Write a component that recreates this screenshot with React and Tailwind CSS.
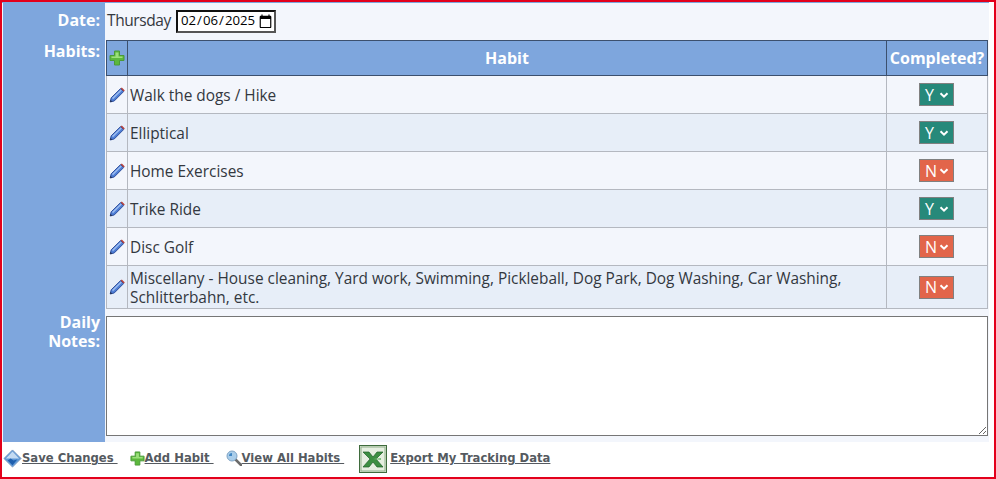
const HABITS = [
  { name: 'Walk the dogs / Hike', done: 'Y' },
  { name: 'Elliptical', done: 'Y' },
  { name: 'Home Exercises', done: 'N' },
  { name: 'Trike Ride', done: 'Y' },
  { name: 'Disc Golf', done: 'N' },
  {
    name: 'Miscellany - House cleaning, Yard work, Swimming, Pickleball, Dog Park, Dog Washing, Car Washing, Schlitterbahn, etc.',
    done: 'N',
  },
]

function PlusIcon({ className }) {
  return (
    <svg viewBox="0 0 16 16" className={className}>
      <path d="M5.5 1h5v4.5H15v5h-4.5V15h-5v-4.5H1v-5h4.5z" fill="#5cb83c" stroke="#4a9a38" strokeWidth="1" />
      <path d="M6.5 2.5h3v4h-3zM2.5 6.5h11v1.5h-11z" fill="#9be07a" />
    </svg>
  )
}

function PencilIcon() {
  return (
    <svg viewBox="0 0 16 16" className="w-[16px] h-[16px]">
      <path d="M1.2 15l1-4.2L11.6 1.6l3 3L5.3 13.9z" fill="#4f7fd6" stroke="#2f4f9c" strokeWidth="1" />
      <path d="M3 11L11.8 2.4l1 1L4 12.2z" fill="#9dbdf0" />
      <path d="M11.6 1.6l1.2-1 3 3-1.2 1z" fill="#b5433f" />
      <path d="M1.2 15l.5-2 1.5 1.5z" fill="#20263c" />
    </svg>
  )
}

function SaveIcon() {
  return (
    <svg viewBox="0 0 20 20" className="w-[19px] h-[19px] shrink-0">
      <path d="M10 1l9 9-9 9-9-9z" fill="#5c97d6" stroke="#7d9ac0" strokeWidth="1" />
      <path d="M10 2.5L17 10H3z" fill="#c3daf2" />
      <path d="M5 12l3-2 3 2 4-1-5 6z" fill="#1f5fae" />
    </svg>
  )
}

function SearchIcon() {
  return (
    <svg viewBox="0 0 16 16" className="w-[16px] h-[16px] shrink-0">
      <path d="M9.5 9.5L15 15" stroke="#6b6b6b" strokeWidth="2.5" strokeLinecap="round" />
      <circle cx="6" cy="6" r="5" fill="#a9cdea" stroke="#7fa3c4" strokeWidth="1" />
      <path d="M3 6a3 3 0 0 1 3-3v3z" fill="#3f86c4" />
    </svg>
  )
}

function ExcelIcon() {
  return (
    <svg viewBox="0 0 28 28" className="w-[28px] h-[28px] shrink-0">
      <rect x="0.5" y="0.5" width="27" height="27" fill="#dce8d6" stroke="#3f6b3d" />
      <rect x="2" y="2" width="24" height="24" fill="#e6efe1" stroke="#8fb08a" />
      <path d="M4 7h6l4 5 4-5h6l-7 7 7 8h-6l-4-5-4 5H4l7-8z" fill="#3c8f42" stroke="#215f2a" strokeWidth="0.7" />
      <path d="M14 14l8-1v2z" fill="#7cc07c" />
    </svg>
  )
}

function YesNo({ value }) {
  const color = value === 'Y' ? 'bg-[#26897a]' : 'bg-[#e2654a]'
  return (
    <div className={`inline-flex items-center justify-between w-[35px] h-[23px] pl-[5px] pr-[4px] border border-[#808080] text-white text-[16px] ${color}`}>
      <span>{value}</span>
      <svg viewBox="0 0 10 10" className="w-[10px] h-[10px]">
        <path d="M1.5 3.2L5 6.7l3.5-3.5" fill="none" stroke="white" strokeWidth="2" />
      </svg>
    </div>
  )
}

function FooterLink({ icon, label, className = '' }) {
  return (
    <a className={`flex items-center text-[11.6px] font-bold text-[#555a60] ${className}`}>
      {icon}
      <span className="underline whitespace-pre">{label}</span>
    </a>
  )
}

export default function App() {
  return (
    <div className="w-[996px] h-[479px] overflow-hidden bg-white border-2 border-[#e3001b] text-[#33383f] font-['Open_Sans',sans-serif]">
      <div className="flex w-[987px] h-[440px] bg-[#f3f6fc] border-t border-[#7ea6dd]">
        <div className="w-[102px] ml-px shrink-0 bg-[#7ea6dd] text-white font-bold text-[16px] text-right pr-[5px] leading-[19px]">
          <div className="pt-[8px]">Date:</div>
          <div className="pt-[12px]">Habits:</div>
          <div className="pt-[252px]">Daily<br />Notes:</div>
        </div>
        <div className="flex-1 pl-px">
          <div className="flex items-center h-[37px] pb-px pl-px gap-[5px] text-[15.5px]">
            <span className="w-[64px] whitespace-nowrap tracking-[-0.4px]">Thursday</span>
            <input
              type="date"
              defaultValue="2025-02-06"
              className="w-[100px] h-[23px] border-2 border-t-[#111111] border-l-[#111111] border-r-[#555555] border-b-[#555555] bg-white pl-[2px] pr-0 text-[13.2px] text-black [&::-webkit-calendar-picker-indicator]:m-0 [&::-webkit-calendar-picker-indicator]:p-0 [&::-webkit-calendar-picker-indicator]:w-[16px]"
            />
          </div>
          <table className="w-[882px] border-collapse table-fixed text-[15.4px]">
            <colgroup>
              <col className="w-[21px]" />
              <col />
              <col className="w-[101px]" />
            </colgroup>
            <thead>
              <tr className="h-[35px] bg-[#7ea6dd] text-white font-bold text-[16px]">
                <th className="border border-[#3c506e] p-0"><PlusIcon className="w-[16px] h-[16px] mx-auto" /></th>
                <th className="border border-[#3c506e] p-0">Habit</th>
                <th className="border border-[#3c506e] p-0">Completed?</th>
              </tr>
            </thead>
            <tbody>
              {HABITS.map((habit, i) => (
                <tr key={habit.name} className={`${i === 5 ? 'h-[43px]' : 'h-[38px]'} ${i % 2 ? 'bg-[#e7eef8]' : 'bg-[#f3f6fc]'}`}>
                  <td className="border border-[#b4b8c0] p-0"><div className="flex justify-center"><PencilIcon /></div></td>
                  <td className="border border-[#b4b8c0] pl-[2px] pr-[2px] pt-[2px] pb-0 leading-[19px]">{habit.name}</td>
                  <td className="border border-[#b4b8c0] p-0 pr-px text-center"><div className="flex justify-center"><YesNo value={habit.done} /></div></td>
                </tr>
              ))}
            </tbody>
          </table>
          <textarea readOnly className="block w-[882px] h-[120px] mt-[7px] bg-white border border-[#767676]" />
        </div>
      </div>
      <div className="flex items-center h-[33px] pl-px font-['DejaVu_Sans',sans-serif]">
        <FooterLink icon={<SaveIcon />} label="Save Changes " />
        <FooterLink icon={<PlusIcon className="w-[15px] h-[15px] shrink-0" />} label="Add Habit " className="ml-[12px]" />
        <FooterLink icon={<SearchIcon />} label="View All Habits " className="ml-[12px]" />
        <FooterLink icon={<ExcelIcon />} label="Export My Tracking Data" className="ml-[15px] gap-[3px]" />
      </div>
    </div>
  )
}
